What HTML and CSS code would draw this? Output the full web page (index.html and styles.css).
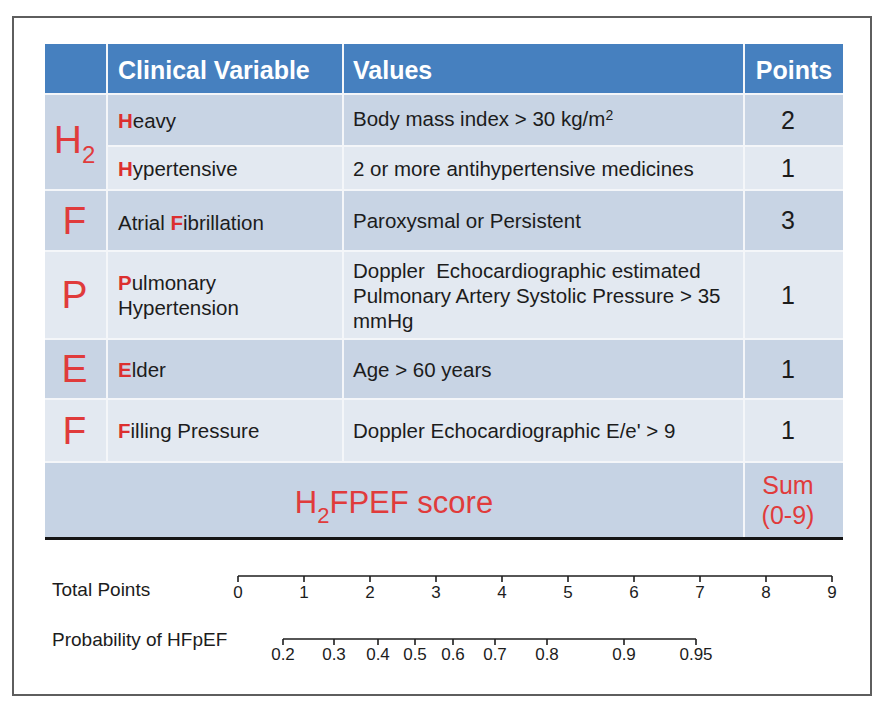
FILE: index.html
```html
<!DOCTYPE html>
<html lang="en">
<head>
<meta charset="utf-8">
<title>H2FPEF score</title>
<link rel="stylesheet" href="styles.css">
</head>
<body>
<div class="frame">
  <div class="score-table">
    <div class="cell head"></div>
    <div class="cell head var">Clinical Variable</div>
    <div class="cell head val">Values</div>
    <div class="cell head pts">Points</div>

    <div class="cell dark letter span2"><span>H<span class="sub">2</span></span></div>
    <div class="cell dark var"><span><span class="init">H</span>eavy</span></div>
    <div class="cell dark val"><span>Body mass index &gt; 30 kg/m<span class="sup">2</span></span></div>
    <div class="cell dark num">2</div>

    <div class="cell light var"><span><span class="init">H</span>ypertensive</span></div>
    <div class="cell light val"><span>2 or more antihypertensive medicines</span></div>
    <div class="cell light num">1</div>

    <div class="cell dark letter">F</div>
    <div class="cell dark var low"><span>Atrial <span class="init">F</span>ibrillation</span></div>
    <div class="cell dark val"><span>Paroxysmal or Persistent</span></div>
    <div class="cell dark num">3</div>

    <div class="cell light letter">P</div>
    <div class="cell light var"><span><span class="init">P</span>ulmonary<br>Hypertension</span></div>
    <div class="cell light val"><span>Doppler&nbsp; Echocardiographic estimated<br>Pulmonary Artery Systolic Pressure &gt; 35<br>mmHg</span></div>
    <div class="cell light num">1</div>

    <div class="cell dark letter">E</div>
    <div class="cell dark var"><span><span class="init">E</span>lder</span></div>
    <div class="cell dark val"><span>Age &gt; 60 years</span></div>
    <div class="cell dark num">1</div>

    <div class="cell light letter">F</div>
    <div class="cell light var"><span><span class="init">F</span>illing Pressure</span></div>
    <div class="cell light val"><span>Doppler Echocardiographic E/e' &gt; 9</span></div>
    <div class="cell light num">1</div>

    <div class="cell score span3"><span>H<span class="sub-s">2</span>FPEF score</span></div>
    <div class="cell score sum"><span>Sum<br>(0-9)</span></div>
  </div>

  <svg class="nomogram" width="856" height="130" viewBox="0 0 856 130" xmlns="http://www.w3.org/2000/svg">
    <g class="axis" stroke="#1e1e1e" stroke-width="1.6" fill="none">
      <path d="M224 36H818"/>
      <path d="M224 36v6M290 36v6M356 36v6M422 36v6M488 36v6M554 36v6M620 36v6M686 36v6M752 36v6M818 36v6"/>
      <path d="M269 99H682"/>
      <path d="M269 99v6M320 99v6M364 99v6M401 99v6M439 99v6M481 99v6M533 99v6M610 99v6M682 99v6"/>
    </g>
    <g class="labels">
      <text class="axis-title" x="38" y="56">Total Points</text>
      <text class="axis-title" x="38" y="106">Probability of HFpEF</text>
    </g>
    <g class="ticks" text-anchor="middle">
      <text x="224" y="58">0</text>
      <text x="290" y="58">1</text>
      <text x="356" y="58">2</text>
      <text x="422" y="58">3</text>
      <text x="488" y="58">4</text>
      <text x="554" y="58">5</text>
      <text x="620" y="58">6</text>
      <text x="686" y="58">7</text>
      <text x="752" y="58">8</text>
      <text x="818" y="58">9</text>
      <text x="269" y="120">0.2</text>
      <text x="320" y="120">0.3</text>
      <text x="364" y="120">0.4</text>
      <text x="401" y="120">0.5</text>
      <text x="439" y="120">0.6</text>
      <text x="481" y="120">0.7</text>
      <text x="533" y="120">0.8</text>
      <text x="610" y="120">0.9</text>
      <text x="682" y="120">0.95</text>
    </g>
  </svg>
</div>
</body>
</html>
```

FILE: styles.css
```css
* { box-sizing: border-box; }

html, body {
  margin: 0;
  padding: 0;
  background: #ffffff;
}

body {
  font-family: "Liberation Sans", Arial, sans-serif;
  color: #1c1c1c;
}

.frame {
  margin: 16px 0 0 12px;
  width: 860px;
  height: 680px;
  border: 2px solid #5e5e5e;
  padding-top: 26px;
}

.score-table {
  margin-left: 31px;
  width: 798px;
  display: grid;
  grid-template-columns: 61px 234px 399px 98px;
  grid-template-rows: 49px 50px 42px 59px 86px 58px 61px 74px;
  gap: 2px;
  background: #f4f6f9;
  border-bottom: 3px solid #151515;
}

.cell {
  display: flex;
  align-items: center;
  font-size: 20.5px;
  line-height: 25px;
}

.head {
  background: #4680bf;
  color: #ffffff;
  font-weight: bold;
  font-size: 25px;
  padding-top: 3px;
}

.dark { background: #c8d4e4; }
.light { background: #e3e9f1; }
.score { background: #c6d3e4; }

.var { padding-left: 10px; }
.val { padding-left: 9px; }
.low { padding-top: 4px; }

.head.pts {
  justify-content: center;
}

.num {
  justify-content: center;
  padding-right: 12px;
  font-size: 25px;
}

.init {
  color: #dc2f2f;
  font-weight: bold;
}

.sup {
  font-size: 14px;
  position: relative;
  top: -6px;
}

.letter {
  justify-content: center;
  color: #e03b3b;
  font-size: 39px;
  line-height: 40px;
  padding-right: 2px;
}

.span2 { grid-row: span 2; }
.span3 { grid-column: span 3; }

.sub {
  font-size: 24px;
  position: relative;
  top: 10px;
}

.score.span3 {
  justify-content: center;
  color: #e03b3b;
  font-size: 31px;
  padding-top: 8px;
}

.sub-s {
  font-size: 22px;
  position: relative;
  top: 10px;
}

.sum {
  justify-content: center;
  text-align: center;
  color: #e03b3b;
  font-size: 25px;
  line-height: 30px;
  padding-right: 12px;
}

.nomogram {
  display: block;
}

.nomogram text {
  font-family: "Liberation Sans", Arial, sans-serif;
  fill: #1c1c1c;
}

.axis-title { font-size: 19px; }
.ticks text { font-size: 17px; }
```
